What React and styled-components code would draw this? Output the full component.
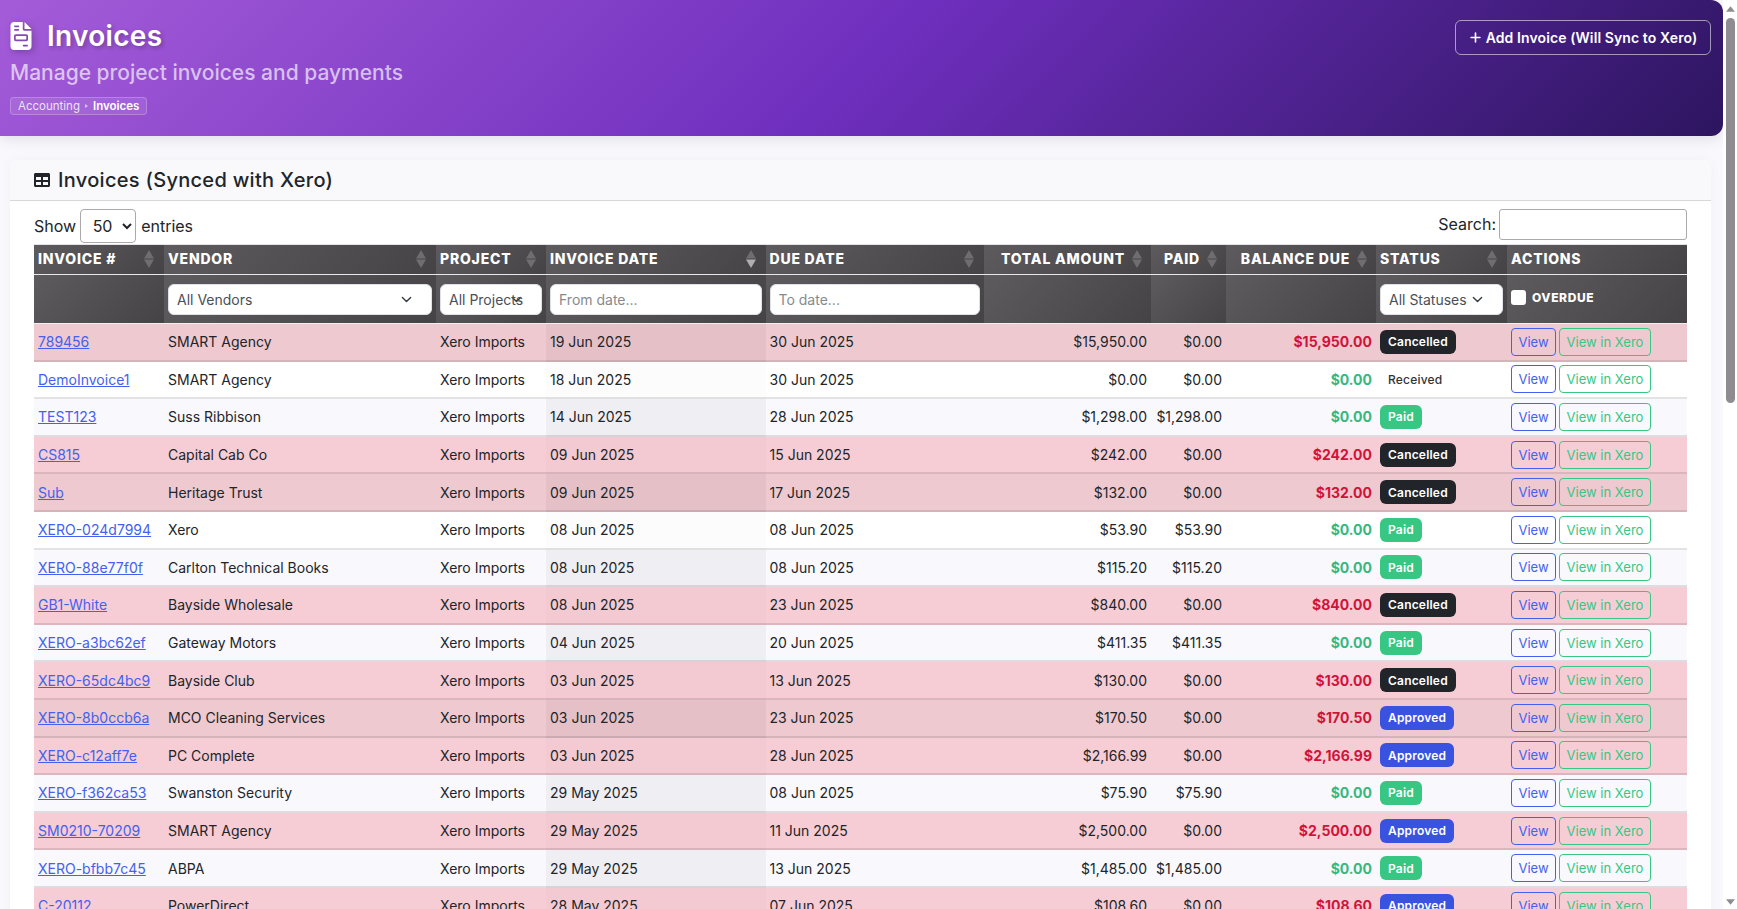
import React from "react";
import styled, { createGlobalStyle } from "styled-components";
import { FaFileInvoice, FaPlus } from "react-icons/fa6";
import { FaTable } from "react-icons/fa";

const invoices = [
  ["789456", "SMART Agency", "19 Jun 2025", "30 Jun 2025", "$15,950.00", "$0.00", "$15,950.00", "Cancelled"],
  ["DemoInvoice1", "SMART Agency", "18 Jun 2025", "30 Jun 2025", "$0.00", "$0.00", "$0.00", "Received"],
  ["TEST123", "Suss Ribbison", "14 Jun 2025", "28 Jun 2025", "$1,298.00", "$1,298.00", "$0.00", "Paid"],
  ["CS815", "Capital Cab Co", "09 Jun 2025", "15 Jun 2025", "$242.00", "$0.00", "$242.00", "Cancelled"],
  ["Sub", "Heritage Trust", "09 Jun 2025", "17 Jun 2025", "$132.00", "$0.00", "$132.00", "Cancelled"],
  ["XERO-024d7994", "Xero", "08 Jun 2025", "08 Jun 2025", "$53.90", "$53.90", "$0.00", "Paid"],
  ["XERO-88e77f0f", "Carlton Technical Books", "08 Jun 2025", "08 Jun 2025", "$115.20", "$115.20", "$0.00", "Paid"],
  ["GB1-White", "Bayside Wholesale", "08 Jun 2025", "23 Jun 2025", "$840.00", "$0.00", "$840.00", "Cancelled"],
  ["XERO-a3bc62ef", "Gateway Motors", "04 Jun 2025", "20 Jun 2025", "$411.35", "$411.35", "$0.00", "Paid"],
  ["XERO-65dc4bc9", "Bayside Club", "03 Jun 2025", "13 Jun 2025", "$130.00", "$0.00", "$130.00", "Cancelled"],
  ["XERO-8b0ccb6a", "MCO Cleaning Services", "03 Jun 2025", "23 Jun 2025", "$170.50", "$0.00", "$170.50", "Approved"],
  ["XERO-c12aff7e", "PC Complete", "03 Jun 2025", "28 Jun 2025", "$2,166.99", "$0.00", "$2,166.99", "Approved"],
  ["XERO-f362ca53", "Swanston Security", "29 May 2025", "08 Jun 2025", "$75.90", "$75.90", "$0.00", "Paid"],
  ["SM0210-70209", "SMART Agency", "29 May 2025", "11 Jun 2025", "$2,500.00", "$0.00", "$2,500.00", "Approved"],
  ["XERO-bfbb7c45", "ABPA", "29 May 2025", "13 Jun 2025", "$1,485.00", "$1,485.00", "$0.00", "Paid"],
  ["C-20112", "PowerDirect", "28 May 2025", "07 Jun 2025", "$108.60", "$0.00", "$108.60", "Approved"],
];

const columns = [
  { label: "Invoice #", width: 130 },
  { label: "Vendor", width: 272 },
  { label: "Project", width: 110 },
  { label: "Invoice Date", width: 219.5, sorted: true },
  { label: "Due Date", width: 218.5 },
  { label: "Total Amount", width: 167, right: true },
  { label: "Paid", width: 75, right: true },
  { label: "Balance Due", width: 150, right: true },
  { label: "Status", width: 131 },
  { label: "Actions", width: 180, plain: true },
];

const SortIcon = ({ sorted }) => (
  <SortSvg viewBox="0 0 10 18">
    <path d="M5 0 10 8.6H0z" fill="#6f6d6f" />
    <path d="M5 18 0 9.4h10z" fill={sorted ? "#b0afb0" : "#6f6d6f"} />
  </SortSvg>
);

const App = () => (
  <>
    <GlobalStyle />
    <Shell>
      <Main>
        <Hero>
          <div>
            <HeroTitle>
              <FaFileInvoice />
              Invoices
            </HeroTitle>
            <HeroSub>Manage project invoices and payments</HeroSub>
            <Crumbs>
              Accounting
              <CrumbSep />
              <strong>Invoices</strong>
            </Crumbs>
          </div>
          <AddButton>
            <FaPlus />
            Add Invoice (Will Sync to Xero)
          </AddButton>
        </Hero>

        <Card>
          <CardHeader>
            <FaTable />
            Invoices (Synced with Xero)
          </CardHeader>
          <CardBody>
            <TableTools>
              <label>
                Show{" "}
                <LengthSelect defaultValue="50">
                  <option>10</option>
                  <option>25</option>
                  <option>50</option>
                  <option>100</option>
                </LengthSelect>{" "}
                entries
              </label>
              <SearchLabel>
                Search:
                <SearchInput />
              </SearchLabel>
            </TableTools>

            <Table>
              <colgroup>
                {columns.map((c) => (
                  <col key={c.label} style={{ width: c.width }} />
                ))}
              </colgroup>
              <thead>
                <tr>
                  {columns.map((c) => (
                    <HeadCell key={c.label}>
                      <HeadInner $right={c.right}>
                        {c.label}
                        {!c.plain && <SortIcon sorted={c.sorted} />}
                      </HeadInner>
                    </HeadCell>
                  ))}
                </tr>
                <tr>
                  <FilterCell />
                  <FilterCell>
                    <FilterSelect defaultValue="All Vendors">
                      <option>All Vendors</option>
                    </FilterSelect>
                  </FilterCell>
                  <FilterCell>
                    <FilterSelect defaultValue="All Projects">
                      <option>All Projects</option>
                    </FilterSelect>
                  </FilterCell>
                  <FilterCell>
                    <FilterInput placeholder="From date..." />
                  </FilterCell>
                  <FilterCell>
                    <FilterInput placeholder="To date..." />
                  </FilterCell>
                  <FilterCell />
                  <FilterCell />
                  <FilterCell />
                  <FilterCell>
                    <FilterSelect defaultValue="All Statuses">
                      <option>All Statuses</option>
                    </FilterSelect>
                  </FilterCell>
                  <FilterCell>
                    <OverdueLabel>
                      <OverdueBox type="checkbox" />
                      Overdue
                    </OverdueLabel>
                  </FilterCell>
                </tr>
              </thead>
              <tbody>
                {invoices.map((row, i) => {
                  const owing = row[6] !== "$0.00";
                  return (
                    <Row key={row[0]} $owing={owing} $odd={i % 2 === 0}>
                      <Cell>
                        <InvoiceLink href="#">{row[0]}</InvoiceLink>
                      </Cell>
                      <Cell>{row[1]}</Cell>
                      <Cell>Xero Imports</Cell>
                      <SortedCell $odd={i % 2 === 0}>{row[2]}</SortedCell>
                      <Cell>{row[3]}</Cell>
                      <MoneyCell>{row[4]}</MoneyCell>
                      <MoneyCell>{row[5]}</MoneyCell>
                      <BalanceCell $owing={owing}>{row[6]}</BalanceCell>
                      <Cell>
                        <Badge $status={row[7]}>{row[7]}</Badge>
                      </Cell>
                      <Cell>
                        <Actions>
                          <ViewButton>View</ViewButton>
                          <XeroButton>View in Xero</XeroButton>
                        </Actions>
                      </Cell>
                    </Row>
                  );
                })}
              </tbody>
            </Table>
          </CardBody>
        </Card>
      </Main>

      <ScrollRail>
        <ScrollArrow viewBox="0 0 10 6">
          <path d="M5 0 10 6H0z" />
        </ScrollArrow>
        <ScrollThumb />
        <ScrollSpace />
        <ScrollArrow viewBox="0 0 10 6">
          <path d="M0 0h10L5 6z" />
        </ScrollArrow>
      </ScrollRail>
    </Shell>
  </>
);

const GlobalStyle = createGlobalStyle`
  html, body {
    margin: 0;
    height: 100%;
    overflow: hidden;
  }
  body {
    background: #f9f9fd;
    color: #212529;
    font-family: Inter, "Noto Sans", "Liberation Sans", sans-serif;
    font-size: 14px;
  }
  * {
    box-sizing: border-box;
  }
`;

const Shell = styled.div`
  display: flex;
  height: 100vh;
  overflow: hidden;
`;

const Main = styled.main`
  flex: 1;
  min-width: 0;
  overflow: hidden;
`;

const Hero = styled.header`
  display: flex;
  justify-content: space-between;
  align-items: flex-start;
  height: 136px;
  padding: 20px 12px 0 10px;
  color: #fff;
  background: linear-gradient(135deg, #a45cd8 0%, #6f2fbe 50%, #2d1560 100%);
  border-radius: 0 12px 12px 0;
  box-shadow: 0 4px 14px rgba(30, 10, 70, 0.1);
`;

const HeroTitle = styled.h1`
  display: flex;
  align-items: center;
  gap: 15px;
  margin: 0;
  height: 32px;
  font-size: 28px;
  font-weight: 600;
  letter-spacing: 0.3px;
  text-shadow: 2px 2px 4px rgba(0, 0, 0, 0.25);

  svg {
    width: 22px;
    height: 28px;
    filter: drop-shadow(2px 2px 3px rgba(0, 0, 0, 0.25));
  }
`;

const HeroSub = styled.p`
  margin: 7px 0 0;
  font-size: 21px;
  font-weight: 500;
  line-height: 28px;
  color: rgba(255, 255, 255, 0.66);
`;

const Crumbs = styled.div`
  display: inline-flex;
  align-items: center;
  height: 18px;
  margin-top: 10px;
  padding: 0 7px;
  font-size: 11.5px;
  color: rgba(255, 255, 255, 0.82);
  background: rgba(255, 255, 255, 0.1);
  border: 1px solid rgba(255, 255, 255, 0.22);
  border-radius: 4px;

  strong {
    font-weight: 600;
    color: #fff;
  }
`;

const CrumbSep = styled.span`
  width: 0;
  height: 0;
  margin: 0 5px;
  border-left: 3px solid rgba(255, 255, 255, 0.6);
  border-top: 2px solid transparent;
  border-bottom: 2px solid transparent;
`;

const AddButton = styled.button`
  display: flex;
  align-items: center;
  justify-content: center;
  gap: 4px;
  width: 256px;
  height: 35px;
  padding: 0 0 1px;
  font-family: inherit;
  font-size: 14px;
  font-weight: 600;
  letter-spacing: 0.1px;
  color: #fff;
  background: transparent;
  border: 1px solid rgba(255, 255, 255, 0.55);
  border-radius: 6px;

  svg {
    width: 13px;
    height: 13px;
  }
`;

const Card = styled.section`
  margin: 24px 12px 0 10px;
  background: #fff;
  border-radius: 8px 8px 0 0;
  box-shadow: 0 0 12px rgba(60, 50, 100, 0.05);
`;

const CardHeader = styled.h2`
  display: flex;
  align-items: center;
  gap: 8px;
  height: 41px;
  margin: 0;
  padding: 0 24px;
  font-size: 20px;
  font-weight: 500;
  letter-spacing: 0.3px;
  color: #212529;
  background: #f9f9fc;
  border-bottom: 1px solid #d8d8db;
  border-radius: 8px 8px 0 0;

  svg {
    width: 16px;
    height: 16px;
  }
`;

const CardBody = styled.div`
  padding: 8px 24px 0;
`;

const TableTools = styled.div`
  display: flex;
  justify-content: space-between;
  align-items: flex-start;
  height: 35px;
  font-size: 16px;
  line-height: 34px;
`;

const LengthSelect = styled.select`
  width: 56px;
  height: 34px;
  margin: 0 1px 0 -1px;
  padding: 0 4px 0 8px;
  font-family: inherit;
  font-size: 16px;
  color: #212529;
  background: #fff;
  border: 1px solid #aaa;
  border-radius: 4px;
`;

const SearchLabel = styled.label`
  display: flex;
  align-items: flex-start;
  gap: 3px;
  line-height: 30px;
`;

const SearchInput = styled.input`
  width: 188px;
  height: 31px;
  background: #fff;
  border: 1px solid #aaa;
  border-radius: 3px;
`;

const Table = styled.table`
  width: 1653px;
  table-layout: fixed;
  border-collapse: separate;
  border-spacing: 0;
  border-top: 1px solid #e4e4e6;
`;

const HeadCell = styled.th`
  height: 30px;
  padding: 0 4px 2px;
  font-size: 14px;
  font-weight: 800;
  letter-spacing: 0.8px;
  text-transform: uppercase;
  text-align: left;
  color: #fff;
  background: linear-gradient(135deg, #5d5b5d 0%, #454345 100%);
  border-bottom: 1px solid #e8e8ea;
`;

const HeadInner = styled.div`
  display: flex;
  align-items: center;
  justify-content: ${({ $right }) => ($right ? "flex-end" : "space-between")};
  gap: 7px;
  padding-right: ${({ $right }) => ($right ? "5px" : "6px")};
  white-space: nowrap;
`;

const SortSvg = styled.svg`
  flex: none;
  width: 10px;
  height: 18px;
`;

const FilterCell = styled.th`
  height: 49px;
  padding: 0 4px;
  vertical-align: middle;
  text-align: left;
  background: linear-gradient(135deg, #5d5b5d 0%, #454345 100%);
  border-bottom: 1px solid #f0f0f2;
`;

const FilterSelect = styled.select`
  display: block;
  width: 100%;
  height: 31px;
  padding: 0 8px;
  font-family: inherit;
  font-size: 14px;
  font-weight: 400;
  color: #495057;
  background: #fff url("data:image/svg+xml,%3csvg xmlns='http://www.w3.org/2000/svg' viewBox='0 0 16 16'%3e%3cpath fill='none' stroke='%23343a40' stroke-linecap='round' stroke-linejoin='round' stroke-width='2' d='m2 5 6 6 6-6'/%3e%3c/svg%3e") no-repeat right 18px center / 13px 11px;
  border: 1px solid #dee2e6;
  border-radius: 6px;
  appearance: none;
`;

const FilterInput = styled.input`
  display: block;
  width: 100%;
  height: 31px;
  padding: 0 8px;
  font-family: inherit;
  font-size: 14px;
  color: #495057;
  background: #fff;
  border: 1px solid #dee2e6;
  border-radius: 6px;

  &::placeholder {
    color: #868a8f;
  }
`;

const OverdueLabel = styled.label`
  display: flex;
  align-items: center;
  gap: 6px;
  margin-top: -3px;
  font-size: 12px;
  font-weight: 800;
  letter-spacing: 0.6px;
  text-transform: uppercase;
  color: #fff;
`;

const OverdueBox = styled.input`
  width: 15px;
  height: 15px;
  margin: 0;
  background: #fff;
  border-radius: 3px;
  appearance: none;
`;

const Row = styled.tr`
  background: ${({ $owing, $odd }) =>
    $owing ? ($odd ? "#efc9d0" : "#f6cdd5") : $odd ? "#f9f8fc" : "#ffffff"};
`;

const Cell = styled.td`
  height: 37.6px;
  padding: 0 4px;
  font-size: 14px;
  color: #212529;
  white-space: nowrap;
  border-bottom: 2px solid rgba(0, 0, 0, 0.11);
`;

const SortedCell = styled(Cell)`
  background: ${({ $odd }) => ($odd ? "rgba(0, 0, 0, 0.04)" : "rgba(0, 0, 0, 0.012)")};
`;

const MoneyCell = styled(Cell)`
  text-align: right;
`;

const BalanceCell = styled(MoneyCell)`
  font-weight: 700;
  color: ${({ $owing }) => ($owing ? "#d1133a" : "#38b77f")};
`;

const InvoiceLink = styled.a`
  color: #4361ee;
  text-decoration: underline;
`;

const badgeColors = {
  Cancelled: "#212529",
  Paid: "#38c683",
  Approved: "#3a52e0",
  Received: "transparent",
};

const Badge = styled.span`
  display: inline-flex;
  align-items: center;
  height: 24px;
  padding: 0 8px;
  font-size: 12px;
  font-weight: ${({ $status }) => ($status === "Received" ? 500 : 600)};
  letter-spacing: 0.2px;
  color: ${({ $status }) => ($status === "Received" ? "#333" : "#fff")};
  background: ${({ $status }) => badgeColors[$status]};
  border-radius: 6px;
`;

const Actions = styled.div`
  display: flex;
  gap: 3px;
`;

const SmallButton = styled.button`
  height: 28px;
  padding: 0;
  font-family: inherit;
  font-size: 13px;
  background: transparent;
  border-radius: 4px;
`;

const ViewButton = styled(SmallButton)`
  width: 45px;
  color: #4361ee;
  border: 1px solid #4361ee;
`;

const XeroButton = styled(SmallButton)`
  width: 92px;
  color: #38c683;
  border: 1px solid #38c683;
`;

const ScrollRail = styled.aside`
  display: flex;
  flex: none;
  flex-direction: column;
  align-items: center;
  width: 14px;
  height: 100%;
  padding: 6px 0 4px;
  background: #fff;
`;

const ScrollArrow = styled.svg`
  flex: none;
  width: 9px;
  height: 6px;
  fill: #8f8c91;
`;

const ScrollThumb = styled.div`
  flex: none;
  width: 9px;
  height: 385px;
  margin-top: 6px;
  background: #8f8c91;
  border-radius: 5px;
`;

const ScrollSpace = styled.div`
  flex: 1;
`;

export default App;
